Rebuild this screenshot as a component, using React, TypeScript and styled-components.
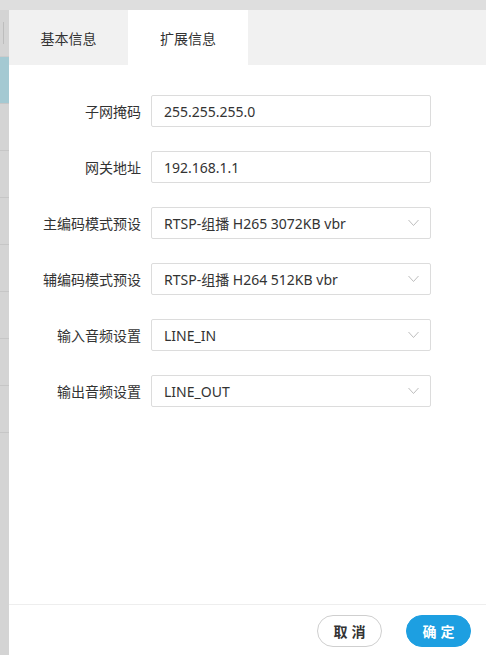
import React from 'react';
import styled, { createGlobalStyle } from 'styled-components';

const GlobalStyle = createGlobalStyle`
  html, body {
    margin: 0;
    padding: 0;
    background: #d4d4d4;
    font-family: "Noto Sans", "Noto Sans CJK SC", sans-serif;
    overflow: hidden;
  }
`;

const Screen = styled.div`
  position: relative;
  width: 486px;
  height: 655px;
  overflow: hidden;
  background: #d4d4d4;
`;

const TopStrip = styled.div`
  height: 10px;
  background: #dedede;
`;

const ListHead = styled.div`
  position: relative;
  height: 47px;
  border-bottom: 1px solid #cbcbcb;
  box-sizing: border-box;
`;

const ScrollThumb = styled.div`
  position: absolute;
  left: 3px;
  top: 12px;
  width: 1px;
  height: 22px;
  background: #bdbdbd;
`;

const ListRow = styled.div<{ $active?: boolean }>`
  height: 47px;
  box-sizing: border-box;
  background: ${({ $active }) => ($active ? '#a4c9d2' : 'transparent')};
  border-bottom: 1px solid #c6c6c6;
`;

const Modal = styled.div`
  position: absolute;
  left: 9px;
  top: 10px;
  width: 480px;
  height: 700px;
  background: #fff;
  display: flex;
  flex-direction: column;
`;

const TabBar = styled.div`
  display: flex;
  height: 55px;
  background: #f1f1f1;
`;

const Tab = styled.div<{ $active?: boolean }>`
  width: ${({ $active }) => ($active ? '120px' : '119px')};
  display: flex;
  align-items: center;
  justify-content: center;
  font-size: 14px;
  color: #333;
  background: ${({ $active }) => ($active ? '#fff' : 'transparent')};
`;

const Form = styled.div`
  flex: 0 0 auto;
  height: 539px;
  padding-top: 30px;
  box-sizing: border-box;
  display: flex;
  flex-direction: column;
  gap: 24px;
`;

const Row = styled.div`
  display: flex;
  align-items: center;
  height: 32px;
`;

const Label = styled.div`
  width: 132px;
  padding-right: 10px;
  text-align: right;
  font-size: 14px;
  color: #333;
  white-space: nowrap;
`;

const Field = styled.div`
  position: relative;
  width: 280px;
  height: 32px;
  box-sizing: border-box;
  border: 1px solid #dcdcdc;
  border-radius: 2px;
  display: flex;
  align-items: center;
  padding: 0 12px;
  font-size: 14px;
  color: #333;
`;

const Arrow = styled.svg`
  position: absolute;
  right: 11px;
  top: 11px;
`;

const Footer = styled.div`
  border-top: 1px solid #eeeeee;
  height: 52px;
  display: flex;
  justify-content: flex-end;
  align-items: flex-start;
  padding: 10px 18px 0 0;
  gap: 24px;
`;

const Button = styled.button<{ $primary?: boolean }>`
  width: 65px;
  height: 32px;
  border-radius: 16px;
  font-family: "Noto Sans", "Noto Sans CJK SC", sans-serif;
  font-size: 14px;
  font-weight: 700;
  letter-spacing: 4px;
  text-indent: 4px;
  cursor: pointer;
  border: 1px solid ${({ $primary }) => ($primary ? '#1d9fe1' : '#cfcfcf')};
  background: ${({ $primary }) => ($primary ? '#1d9fe1' : '#fff')};
  color: ${({ $primary }) => ($primary ? '#fff' : '#333')};
`;

const fields = [
  { label: '子网掩码', value: '255.255.255.0' },
  { label: '网关地址', value: '192.168.1.1' },
  { label: '主编码模式预设', value: 'RTSP-组播 H265 3072KB vbr', select: true },
  { label: '辅编码模式预设', value: 'RTSP-组播 H264 512KB vbr', select: true },
  { label: '输入音频设置', value: 'LINE_IN', select: true },
  { label: '输出音频设置', value: 'LINE_OUT', select: true },
];

const Chevron = () => (
  <Arrow width="11" height="8" viewBox="0 0 11 8">
    <polyline points="0.5,1 5.5,6.5 10.5,1" fill="none" stroke="#bdbdbd" strokeWidth="1" />
  </Arrow>
);

export default function App() {
  return (
    <>
      <GlobalStyle />
      <Screen>
        <TopStrip />
        <ListHead>
          <ScrollThumb />
        </ListHead>
        <ListRow $active />
        {[0, 1, 2, 3, 4, 5, 6].map((i) => (
          <ListRow key={i} />
        ))}
        <Modal>
          <TabBar>
            <Tab>基本信息</Tab>
            <Tab $active>扩展信息</Tab>
          </TabBar>
          <Form>
            {fields.map((f) => (
              <Row key={f.label}>
                <Label>{f.label}</Label>
                <Field>
                  {f.value}
                  {f.select && <Chevron />}
                </Field>
              </Row>
            ))}
          </Form>
          <Footer>
            <Button>取消</Button>
            <Button $primary>确定</Button>
          </Footer>
        </Modal>
      </Screen>
    </>
  );
}
